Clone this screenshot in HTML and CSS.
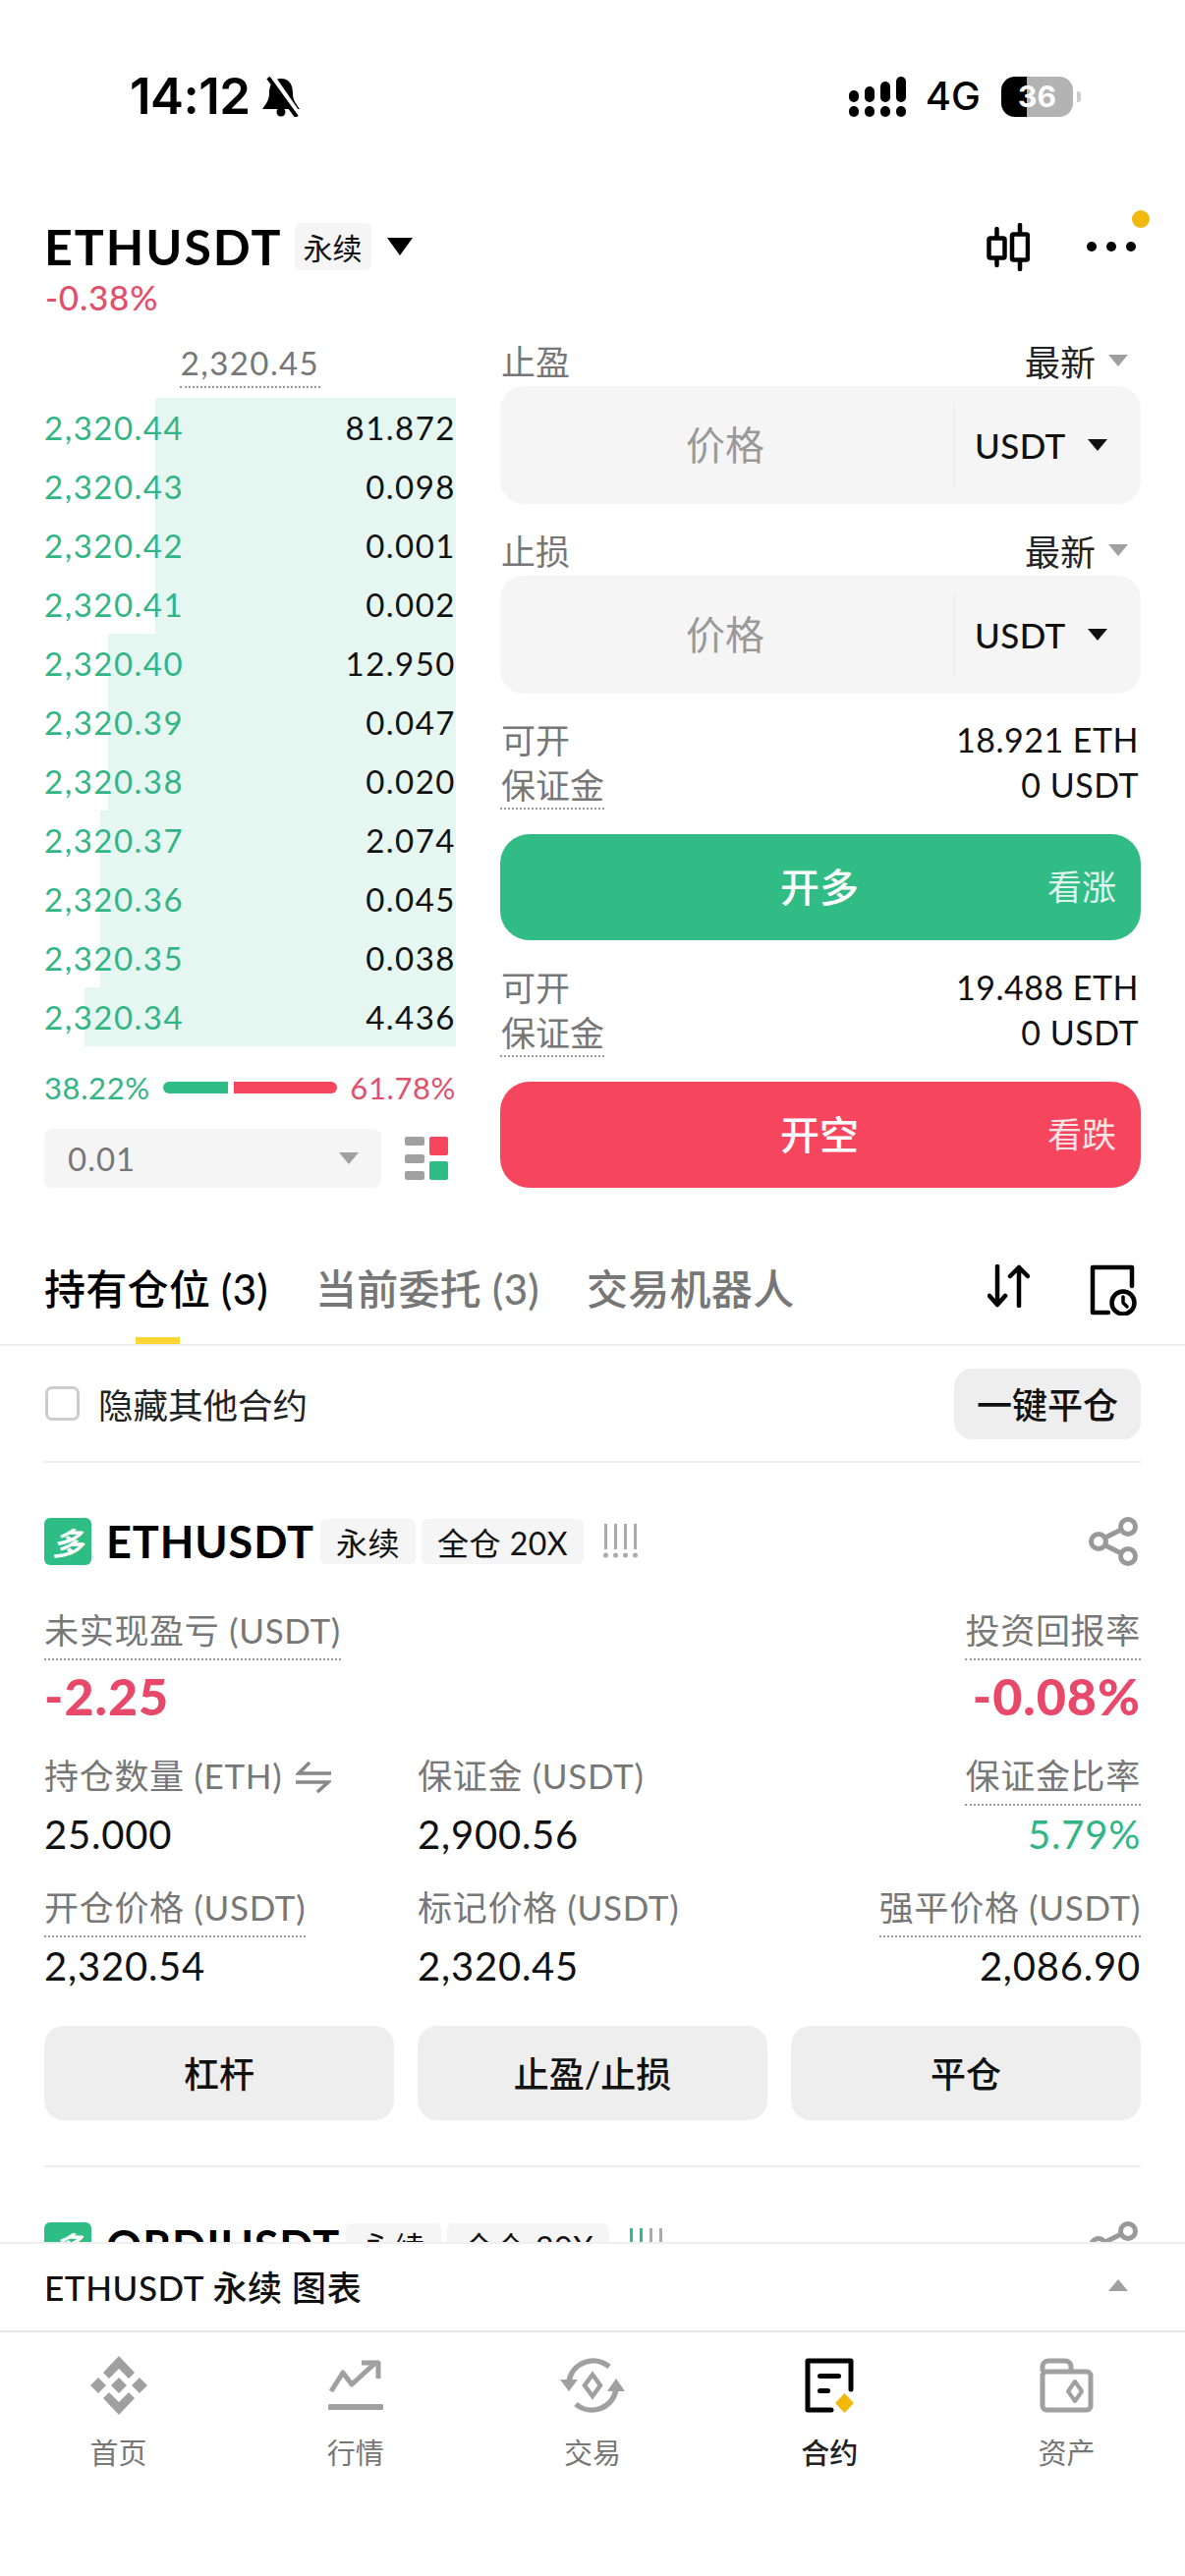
FILE: index.html
```html
<!DOCTYPE html>
<html lang="zh">
<head>
    <meta charset="UTF-8">
    <meta name="viewport" content="width=device-width, initial-scale=1.0">
    <title>ETHUSDT 永续</title>
    <link rel="stylesheet" href="styles.css">
</head>
<body>
<div class="page">
    <div class="status">
        <div class="status-left">
            <span class="clock">14:12</span>
            <svg class="bell" width="41" height="42" viewBox="0 0 41 42">
                <path d="M20 3C11 3 8 10 8 18C8 25 5 28 1 34H39C35 28 32 25 32 18C32 10 29 3 20 3Z" fill="#000"/>
                <circle cx="20" cy="37" r="4.5" fill="#000"/>
                <path d="M10 0L39 42" stroke="#fff" stroke-width="6"/>
                <path d="M7 2L36 42" stroke="#000" stroke-width="4"/>
            </svg>
        </div>
        <div class="status-right">
            <svg width="58" height="41" viewBox="0 0 58 41" fill="#000">
                <rect x="0" y="14" width="10" height="12" rx="5"/><rect x="0" y="30" width="10" height="11" rx="5"/>
                <rect x="16" y="10" width="10" height="16" rx="5"/><rect x="16" y="30" width="10" height="11" rx="5"/>
                <rect x="32" y="5" width="10" height="21" rx="5"/><rect x="32" y="30" width="10" height="11" rx="5"/>
                <rect x="48" y="0" width="10" height="26" rx="5"/><rect x="48" y="30" width="10" height="11" rx="5"/>
            </svg>
            <span class="network">4G</span>
            <span class="battery">36</span>
        </div>
    </div>

    <div class="market">
        <span class="market-name">ETHUSDT</span>
        <span class="tag tag-head">永续</span>
        <span class="caret caret-black"></span>
        <div class="market-tools">
            <svg width="44" height="49" viewBox="0 0 44 49" fill="none" stroke="#000" stroke-width="4.5" stroke-linecap="round">
                <rect x="2.5" y="15.5" width="16" height="20" rx="1.5"/>
                <path d="M10.5 6V15M10.5 36V43"/>
                <rect x="26" y="11.5" width="16" height="26" rx="1.5"/>
                <path d="M34 2V11M34 38V47"/>
            </svg>
            <div class="more">
                <svg width="50" height="12" viewBox="0 0 50 12" fill="#000">
                    <circle cx="5" cy="6" r="5"/><circle cx="25" cy="6" r="5"/><circle cx="45" cy="6" r="5"/>
                </svg>
                <span class="more-dot"></span>
            </div>
        </div>
    </div>
    <div class="change">-0.38%</div>

    <div class="trade">
        <div class="book">
            <div class="mark"><span>2,320.45</span></div>
            <div class="book-row"><i class="depth" style="width: 306px"></i><span class="price">2,320.44</span><span class="qty">81.872</span></div>
            <div class="book-row"><i class="depth" style="width: 306px"></i><span class="price">2,320.43</span><span class="qty">0.098</span></div>
            <div class="book-row"><i class="depth" style="width: 306px"></i><span class="price">2,320.42</span><span class="qty">0.001</span></div>
            <div class="book-row"><i class="depth" style="width: 306px"></i><span class="price">2,320.41</span><span class="qty">0.002</span></div>
            <div class="book-row"><i class="depth" style="width: 354px"></i><span class="price">2,320.40</span><span class="qty">12.950</span></div>
            <div class="book-row"><i class="depth" style="width: 354px"></i><span class="price">2,320.39</span><span class="qty">0.047</span></div>
            <div class="book-row"><i class="depth" style="width: 354px"></i><span class="price">2,320.38</span><span class="qty">0.020</span></div>
            <div class="book-row"><i class="depth" style="width: 362px"></i><span class="price">2,320.37</span><span class="qty">2.074</span></div>
            <div class="book-row"><i class="depth" style="width: 362px"></i><span class="price">2,320.36</span><span class="qty">0.045</span></div>
            <div class="book-row"><i class="depth" style="width: 362px"></i><span class="price">2,320.35</span><span class="qty">0.038</span></div>
            <div class="book-row"><i class="depth" style="width: 378px"></i><span class="price">2,320.34</span><span class="qty">4.436</span></div>
            <div class="ratio">
                <span class="up">38.22%</span>
                <div class="ratio-bar"><i class="ratio-up"></i><i class="ratio-down"></i></div>
                <span class="down">61.78%</span>
            </div>
            <div class="depth-tools">
                <div class="select"><span>0.01</span><span class="caret caret-gray"></span></div>
                <svg width="44" height="44" viewBox="0 0 44 44">
                    <rect x="0" y="0" width="20" height="9" rx="2" fill="#a0a0a0"/>
                    <rect x="0" y="18" width="20" height="9" rx="2" fill="#a0a0a0"/>
                    <rect x="0" y="35" width="20" height="9" rx="2" fill="#a0a0a0"/>
                    <rect x="25" y="0" width="19" height="19" rx="2" fill="#f6465d"/>
                    <rect x="25" y="25" width="19" height="19" rx="2" fill="#2ebd85"/>
                </svg>
            </div>
        </div>

        <div class="form">
            <div class="field-label"><span>止盈</span><span class="latest">最新<span class="caret caret-gray"></span></span></div>
            <div class="input">
                <span class="input-text">价格</span>
                <span class="input-unit">USDT<span class="caret caret-small"></span></span>
            </div>
            <div class="field-label field-next"><span>止损</span><span class="latest">最新<span class="caret caret-gray"></span></span></div>
            <div class="input">
                <span class="input-text">价格</span>
                <span class="input-unit">USDT<span class="caret caret-small"></span></span>
            </div>
            <div class="info">
                <div class="info-row"><span class="muted">可开</span><span>18.921 ETH</span></div>
                <div class="info-row"><span class="muted dotted">保证金</span><span>0 USDT</span></div>
            </div>
            <div class="action action-long"><span class="action-main">开多</span><span class="action-side">看涨</span></div>
            <div class="info">
                <div class="info-row"><span class="muted">可开</span><span>19.488 ETH</span></div>
                <div class="info-row"><span class="muted dotted">保证金</span><span>0 USDT</span></div>
            </div>
            <div class="action action-short"><span class="action-main">开空</span><span class="action-side">看跌</span></div>
        </div>
    </div>

    <div class="tabs">
        <span class="tab tab-active">持有仓位 (3)</span>
        <span class="tab">当前委托 (3)</span>
        <span class="tab">交易机器人</span>
        <div class="tabs-tools">
            <svg width="43" height="44" viewBox="0 0 43 44" fill="none" stroke="#000" stroke-width="4.5" stroke-linecap="round" stroke-linejoin="round">
                <path d="M10 2V41M2 32L10 41L18 32"/>
                <path d="M32 42V3M23 12L32 3L41 12"/>
            </svg>
            <svg width="48" height="52" viewBox="0 0 48 52" fill="none" stroke="#000" stroke-width="4.5" stroke-linecap="round" stroke-linejoin="round">
                <path d="M43 22V3H3V49H19"/>
                <circle cx="34" cy="39" r="11.5"/>
                <path d="M34 33V39L38 43" stroke-width="3.5"/>
            </svg>
        </div>
    </div>

    <div class="filter">
        <label class="check"><span class="check-box"></span>隐藏其他合约</label>
        <span class="close-all">一键平仓</span>
    </div>

    <div class="positions">
        <div class="position">
            <div class="position-head">
                <span class="side-badge">多</span>
                <span class="symbol">ETHUSDT</span>
                <span class="tag">永续</span>
                <span class="tag">全仓 20X</span>
                <svg class="risk" width="36" height="36" viewBox="0 0 36 36" fill="#aaa">
                    <rect x="1" y="0" width="3" height="26"/><circle cx="2.5" cy="32" r="2.5"/>
                    <rect x="11" y="0" width="3" height="26"/><circle cx="12.5" cy="32" r="2.5"/>
                    <rect x="21" y="0" width="3" height="26"/><circle cx="22.5" cy="32" r="2.5"/>
                    <rect x="31" y="0" width="3" height="26"/><circle cx="32.5" cy="32" r="2.5"/>
                </svg>
                <svg class="share" width="50" height="50" viewBox="0 0 50 50" fill="none" stroke="#999" stroke-width="5">
                    <circle cx="10" cy="25" r="7.5"/><circle cx="40" cy="10" r="7.5"/><circle cx="40" cy="40" r="7.5"/>
                    <path d="M17 21L33 13M17 29L33 37"/>
                </svg>
            </div>
            <div class="metrics">
                <div class="metric metric-first">
                    <span class="metric-label dotted">未实现盈亏 (USDT)</span>
                    <span class="metric-value metric-big down">-2.25</span>
                </div>
                <div class="metric"></div>
                <div class="metric metric-end">
                    <span class="metric-label dotted">投资回报率</span>
                    <span class="metric-value metric-big down">-0.08%</span>
                </div>
                <div class="metric">
                    <span class="metric-label">持仓数量 (ETH)
                        <svg class="swap" width="36" height="32" viewBox="0 0 36 32" fill="none" stroke="#888" stroke-width="3.5">
                            <path d="M36 12H3L14 1"/><path d="M0 21H33L22 31"/>
                        </svg>
                    </span>
                    <span class="metric-value">25.000</span>
                </div>
                <div class="metric">
                    <span class="metric-label">保证金 (USDT)</span>
                    <span class="metric-value">2,900.56</span>
                </div>
                <div class="metric metric-end">
                    <span class="metric-label dotted">保证金比率</span>
                    <span class="metric-value up">5.79%</span>
                </div>
                <div class="metric">
                    <span class="metric-label dotted">开仓价格 (USDT)</span>
                    <span class="metric-value">2,320.54</span>
                </div>
                <div class="metric">
                    <span class="metric-label">标记价格 (USDT)</span>
                    <span class="metric-value">2,320.45</span>
                </div>
                <div class="metric metric-end">
                    <span class="metric-label dotted">强平价格 (USDT)</span>
                    <span class="metric-value">2,086.90</span>
                </div>
            </div>
            <div class="position-actions">
                <span class="soft-btn">杠杆</span>
                <span class="soft-btn">止盈/止损</span>
                <span class="soft-btn">平仓</span>
            </div>
        </div>
        <div class="position">
            <div class="position-head">
                <span class="side-badge">多</span>
                <span class="symbol">ORDIUSDT</span>
                <span class="tag">永续</span>
                <span class="tag">全仓 20X</span>
                <svg class="risk" width="36" height="36" viewBox="0 0 36 36" fill="#aaa">
                    <rect x="1" y="0" width="3" height="26" fill="#2ebd85"/>
                    <rect x="11" y="0" width="3" height="26" fill="#2ebd85"/>
                    <rect x="21" y="0" width="3" height="26"/>
                    <rect x="31" y="0" width="3" height="26"/>
                </svg>
                <svg class="share" width="50" height="50" viewBox="0 0 50 50" fill="none" stroke="#999" stroke-width="5">
                    <circle cx="10" cy="25" r="7.5"/><circle cx="40" cy="10" r="7.5"/><circle cx="40" cy="40" r="7.5"/>
                    <path d="M17 21L33 13M17 29L33 37"/>
                </svg>
            </div>
        </div>
    </div>

    <div class="chart-bar">
        <span>ETHUSDT 永续 图表</span>
        <span class="caret caret-gray caret-up"></span>
    </div>

    <nav class="tabbar">
        <div class="tabbar-item">
            <div class="tabbar-icon">
                <svg width="58" height="60" viewBox="0 0 58 60" fill="#a0a0a0">
                    <path d="M29 0L45 17L39 23L29 13L19 23L13 17Z"/>
                    <path d="M29 60L45 43L39 37L29 47L19 37L13 43Z"/>
                    <path d="M29 22L37 30L29 38L21 30Z"/>
                    <path d="M8 22L16 30L8 38L0 30Z"/>
                    <path d="M50 22L58 30L50 38L42 30Z"/>
                </svg>
            </div>
            <span>首页</span>
        </div>
        <div class="tabbar-item">
            <div class="tabbar-icon">
                <svg width="56" height="52" viewBox="0 0 56 52" fill="none" stroke="#a0a0a0" stroke-width="5" stroke-linejoin="round">
                    <path d="M3 32L15 13L24 25L47 4"/>
                    <path d="M34 3H51V19"/>
                    <path d="M2 48H54" stroke-width="6" stroke-linecap="round"/>
                </svg>
            </div>
            <span>行情</span>
        </div>
        <div class="tabbar-item">
            <div class="tabbar-icon">
                <svg width="70" height="56" viewBox="0 0 70 56" fill="none" stroke="#a0a0a0" stroke-width="5.5">
                    <path d="M52 9A25 25 0 0 0 11 24"/>
                    <path d="M18 47A25 25 0 0 0 59 32"/>
                    <path d="M2 22H20L11 34Z" fill="#a0a0a0" stroke="none"/>
                    <path d="M50 34H68L59 21Z" fill="#a0a0a0" stroke="none"/>
                    <path d="M35 17L43 28L35 39L27 28Z" stroke-width="4.5"/>
                </svg>
            </div>
            <span>交易</span>
        </div>
        <div class="tabbar-item tabbar-active">
            <div class="tabbar-icon">
                <svg width="50" height="56" viewBox="0 0 50 56">
                    <path d="M47 32V3H3V53H27" fill="none" stroke="#000" stroke-width="5" stroke-linejoin="round" stroke-linecap="round"/>
                    <rect x="13" y="16" width="24" height="5" rx="2.5"/>
                    <rect x="13" y="31" width="13" height="5" rx="2.5"/>
                    <path d="M40.5 36L50 46L40.5 56L31 46Z" fill="#f0b90b"/>
                </svg>
            </div>
            <span>合约</span>
        </div>
        <div class="tabbar-item">
            <div class="tabbar-icon">
                <svg width="55" height="56" viewBox="0 0 55 56" fill="none" stroke="#a0a0a0" stroke-width="5" stroke-linejoin="round">
                    <path d="M3 14V9A6 6 0 0 1 9 3H26A6 6 0 0 1 32 9V14"/>
                    <rect x="3" y="14" width="49" height="39" rx="4"/>
                    <path d="M36 24L43 34L36 44L29 34Z" stroke-width="4"/>
                </svg>
            </div>
            <span>资产</span>
        </div>
    </nav>
</div>
</body>
</html>
```

FILE: styles.css
```css
* {
    box-sizing: border-box;
}

body {
    margin: 0;
    background: #fff;
    color: #111;
    font-family: Lato, "Noto Sans CJK SC", sans-serif;
}

.page {
    width: 1206px;
    height: 2622px;
    display: flex;
    flex-direction: column;
    overflow: hidden;
}

/* status bar */
.status {
    height: 226px;
    flex: none;
    padding: 77px 114px 0 132px;
    display: flex;
    justify-content: space-between;
    align-items: flex-start;
    color: #000;
    font-family: Inter, sans-serif;
}

.status-left,
.status-right {
    display: flex;
    align-items: center;
    height: 42px;
}

.clock {
    font-size: 51px;
    font-weight: 600;
    letter-spacing: -0.5px;
    line-height: 42px;
}

.bell {
    margin-left: 11px;
}

.network {
    margin-left: 20px;
    font-size: 40px;
    font-weight: 500;
    line-height: 42px;
}

.battery {
    position: relative;
    margin-left: 21px;
    width: 73px;
    height: 41px;
    border-radius: 14px;
    background: linear-gradient(90deg, #000 36%, #b3b3b3 36%);
    color: #fff;
    font-size: 30px;
    font-weight: 700;
    line-height: 41px;
    text-align: center;
}

.battery::after {
    content: "";
    position: absolute;
    left: 77px;
    top: 15px;
    width: 4px;
    height: 11px;
    border-radius: 0 3px 3px 0;
    background: #ccc;
}

/* market title */
.market {
    height: 50px;
    flex: none;
    padding: 0 50px 0 45px;
    display: flex;
    align-items: center;
}

.market-name {
    font-size: 50px;
    font-weight: 700;
    letter-spacing: 2px;
    color: #000;
}

.tag {
    height: 46px;
    padding: 0 16px;
    margin-left: 6px;
    display: flex;
    align-items: center;
    background: #f5f5f5;
    border-radius: 6px;
    font-size: 32px;
    letter-spacing: 0.5px;
    color: #111;
}

.tag-head {
    margin-left: 12px;
    height: 48px;
    padding: 0 9px;
    font-size: 30px;
    letter-spacing: 0;
}

.caret {
    display: inline-block;
    width: 0;
    height: 0;
    border-style: solid;
    border-color: transparent;
}

.caret-black {
    margin-left: 16px;
    border-width: 18px 13px 0;
    border-top-color: #000;
}

.caret-gray {
    border-width: 12px 10px 0;
    border-top-color: #a0a0a0;
}

.caret-small {
    margin-left: 22px;
    border-width: 12px 10px 0;
    border-top-color: #111;
}

.caret-up {
    border-width: 0 10px 12px;
    border-bottom-color: #a0a0a0;
    border-top-color: transparent;
}

.market-tools {
    margin-left: auto;
    display: flex;
    align-items: center;
    gap: 58px;
}

.more {
    position: relative;
    display: flex;
}

.more-dot {
    position: absolute;
    top: -31px;
    right: -14px;
    width: 18px;
    height: 18px;
    border-radius: 50%;
    background: #f0b90b;
}

.change {
    height: 40px;
    flex: none;
    margin-top: 6px;
    padding-left: 46px;
    line-height: 40px;
    font-size: 35px;
    font-weight: 500;
    letter-spacing: 0.8px;
    color: #e0506c;
}

/* order book and form */
.trade {
    flex: none;
    margin-top: 18px;
    padding: 0 45px;
    display: grid;
    grid-template-columns: 419px 652px;
    column-gap: 45px;
}

.mark {
    height: 65px;
    padding-top: 6px;
    display: flex;
    justify-content: center;
}

.mark span {
    height: 49px;
    padding: 0 1px;
    line-height: 46px;
    font-size: 33px;
    color: #777;
    border-bottom: 2px dotted #999;
    letter-spacing: 1.4px;
}

.book-row {
    position: relative;
    height: 60px;
    display: flex;
    justify-content: space-between;
    align-items: center;
    font-size: 33px;
    letter-spacing: 1.5px;
}

.depth {
    position: absolute;
    top: 0;
    bottom: 0;
    right: 0;
    background: #e6f7f2;
}

.price,
.qty {
    position: relative;
}

.qty {
    color: #111;
}

.price {
    color: #32b586;
}

.ratio {
    height: 40px;
    margin-top: 22px;
    display: flex;
    align-items: center;
    font-size: 31px;
    letter-spacing: 0.6px;
}

.up {
    color: #32b586;
}

.down {
    color: #e0506c;
}

.ratio-bar {
    flex: 1;
    margin: 0 13px;
    display: flex;
    gap: 6px;
}

.ratio-up,
.ratio-down {
    height: 12px;
}

.ratio-up {
    flex: 66;
    background: #2ebd85;
    border-radius: 6px 0 0 6px;
}

.ratio-down {
    flex: 105;
    background: #f6465d;
    border-radius: 0 6px 6px 0;
}

.depth-tools {
    height: 60px;
    margin-top: 22px;
    display: flex;
    justify-content: space-between;
    align-items: center;
    padding-right: 8px;
}

.select {
    width: 343px;
    height: 60px;
    padding: 0 23px 0 24px;
    display: flex;
    justify-content: space-between;
    align-items: center;
    background: #f5f5f5;
    border-radius: 8px;
    font-size: 33px;
    letter-spacing: 1px;
    color: #777;
}

.field-label {
    height: 53px;
    padding: 0 13px 0 1px;
    display: flex;
    justify-content: space-between;
    align-items: center;
    font-size: 35px;
    color: #777;
}

.field-next {
    margin-top: 20px;
}

.latest {
    display: flex;
    align-items: center;
    gap: 13px;
    font-size: 36px;
    color: #222;
}

.input {
    height: 120px;
    display: flex;
    align-items: center;
    background: #f5f5f5;
    border-radius: 24px;
}

.input-text {
    flex: 1;
    padding: 0 3px 4px 0;
    text-align: center;
    font-size: 40px;
    color: #999;
}

.input-unit {
    width: 191px;
    height: 84px;
    padding-left: 20px;
    display: flex;
    align-items: center;
    border-left: 2px solid #eee;
    font-size: 35px;
    font-weight: 500;
    letter-spacing: 0.4px;
    color: #111;
}

.info {
    margin-top: 24px;
    font-size: 34px;
    letter-spacing: 0.5px;
}

.action + .info {
    margin-top: 25px;
}

.info-row {
    display: flex;
    justify-content: space-between;
    align-items: flex-start;
    line-height: 46px;
    padding-right: 2px;
    color: #111;
}

.muted {
    font-size: 35px;
    letter-spacing: 0;
    color: #777;
    padding-left: 1px;
}

.dotted {
    border-bottom: 2px dotted #999;
}

.action {
    position: relative;
    height: 108px;
    margin-top: 25px;
    padding-bottom: 5px;
    display: flex;
    justify-content: center;
    align-items: center;
    border-radius: 30px;
    color: #fff;
}

.action-long {
    background: #31bc86;
}

.action-short {
    background: #f6465d;
}

.action-main {
    font-size: 40px;
    font-weight: 500;
    margin-left: -2px;
}

.action-side {
    position: absolute;
    right: 25px;
    font-size: 35px;
    opacity: 0.85;
}

/* position tabs */
.tabs {
    height: 102px;
    flex: none;
    margin-top: 59px;
    padding: 22px 49px 0 45px;
    display: flex;
    gap: 48px;
    border-bottom: 2px solid #eee;
}

.tab {
    position: relative;
    height: 78px;
    line-height: 44px;
    font-size: 42px;
    font-weight: 500;
    letter-spacing: 0.3px;
    color: #777;
}

.tab-active {
    color: #000;
}

.tab-active::after {
    content: "";
    position: absolute;
    left: 93px;
    bottom: 0;
    width: 45px;
    height: 7px;
    background: #fcd535;
}

.tabs-tools {
    margin-left: auto;
    display: flex;
    align-items: flex-start;
    gap: 61px;
    margin-top: -3px;
}

.filter {
    height: 119px;
    flex: none;
    margin: 0 45px;
    display: flex;
    justify-content: space-between;
    align-items: center;
    border-bottom: 2px solid #eee;
}

.check {
    display: flex;
    align-items: center;
    gap: 19px;
    font-size: 35.5px;
    color: #222;
}

.check-box {
    width: 35px;
    height: 35px;
    margin-left: 1px;
    border: 3px solid #ccc;
    border-radius: 7px;
}

.close-all {
    width: 190px;
    height: 72px;
    padding-bottom: 2px;
    display: flex;
    justify-content: center;
    align-items: center;
    background: #eee;
    border-radius: 18px;
    font-size: 36px;
    font-weight: 500;
    color: #111;
}

/* positions */
.positions {
    flex: 1;
    min-height: 0;
    overflow: hidden;
}

.position {
    margin: 0 45px;
    padding: 56px 0 46px;
    border-bottom: 2px solid #eee;
}

.position-head {
    height: 48px;
    display: flex;
    align-items: center;
}

.side-badge {
    width: 48px;
    height: 48px;
    display: flex;
    justify-content: center;
    align-items: center;
    background: #2ebd85;
    border-radius: 6px;
    color: #fff;
    font-size: 32px;
    font-weight: 700;
    font-style: italic;
}

.symbol {
    margin-left: 15px;
    font-size: 45px;
    font-weight: 700;
    letter-spacing: 0.9px;
    color: #000;
}

.risk {
    margin-left: 20px;
}

.share {
    margin-left: auto;
    margin-right: 3px;
}

.metrics {
    margin-top: 45px;
    display: grid;
    grid-template-columns: 380px 1fr auto;
    row-gap: 28px;
}

.metric {
    display: flex;
    flex-direction: column;
    align-items: flex-start;
}

.metric-end {
    align-items: flex-end;
}

.metric-label {
    display: block;
    height: 52px;
    padding-bottom: 8px;
    line-height: 42px;
    font-size: 35px;
    letter-spacing: 0.7px;
    color: #777;
    white-space: nowrap;
}

.swap {
    vertical-align: -4px;
    margin-left: 4px;
}

.metric-value {
    margin-top: 4px;
    height: 50px;
    line-height: 50px;
    font-size: 40px;
    letter-spacing: 0.8px;
    color: #111;
}

.metric-big {
    height: 64px;
    line-height: 64px;
    font-size: 52px;
    font-weight: 900;
    letter-spacing: 1px;
    color: #e8496a;
}

.metric .up {
    font-size: 40px;
    color: #32b586;
}

.position-actions {
    margin-top: 36px;
    display: grid;
    grid-template-columns: repeat(3, 1fr);
    column-gap: 24px;
}

.soft-btn {
    height: 96px;
    padding-bottom: 3px;
    display: flex;
    justify-content: center;
    align-items: center;
    background: #eee;
    border-radius: 20px;
    font-size: 36px;
    font-weight: 500;
    color: #111;
}

/* bottom */
.chart-bar {
    height: 92px;
    flex: none;
    padding: 0 58px 4px 45px;
    display: flex;
    justify-content: space-between;
    align-items: center;
    border-top: 2px solid #eee;
    border-bottom: 2px solid #e8e8e8;
    background: #fff;
    font-size: 35px;
    font-weight: 500;
    letter-spacing: 0.6px;
    color: #111;
}

.tabbar {
    height: 248px;
    flex: none;
    display: grid;
    grid-template-columns: repeat(5, 1fr);
    background: #fff;
}

.tabbar-item {
    padding-top: 24px;
    display: flex;
    flex-direction: column;
    align-items: center;
    font-size: 29px;
    color: #777;
}

.tabbar-item span {
    margin-top: 19px;
    line-height: 40px;
}

.tabbar-icon {
    height: 60px;
    display: flex;
    align-items: center;
    justify-content: center;
}

.tabbar-active {
    color: #222;
    font-weight: 500;
}
```
